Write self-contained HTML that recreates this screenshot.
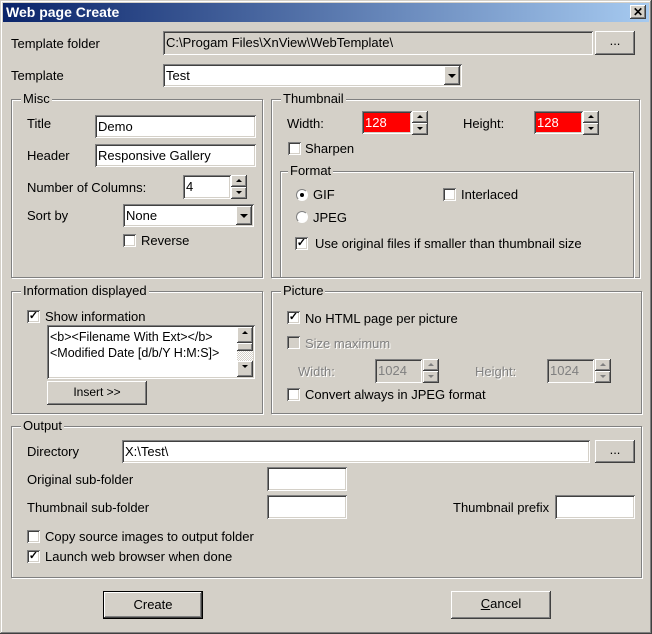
<!DOCTYPE html>
<html><head><style>
*{margin:0;padding:0;box-sizing:border-box}
body{width:652px;height:634px;background:#d4d0c8;position:relative;overflow:hidden;font:13px "Liberation Sans",sans-serif;color:#000}
.win{position:absolute;left:0;top:0;width:652px;height:634px;box-shadow:inset -1px -1px #404040,inset 1px 1px #d4d0c8,inset -2px -2px #808080,inset 2px 2px #fff}
.tb{position:absolute;left:3px;top:3px;width:646px;height:19px;background:linear-gradient(to right,#0a246a,#a6caf0);color:#fff;font-weight:bold;font-size:14px;line-height:19px;padding-left:3px}
.x{position:absolute;left:630px;top:5px;width:16px;height:14px;background:#d4d0c8;box-shadow:inset -1px -1px #404040,inset 1px 1px #fff,inset -2px -2px #808080;font:bold 12px "Liberation Sans";line-height:14px;text-align:center;color:#000}
.t{position:absolute;line-height:16px;white-space:nowrap;margin-top:1px}
.d{color:#808080;text-shadow:1px 1px #fff}
.f{position:absolute;background:#fff;box-shadow:inset 1px 1px #808080,inset -1px -1px #fff,inset 2px 2px #404040,inset -2px -2px #d4d0c8;padding:3px 0 0 3px;line-height:18px;white-space:nowrap;overflow:hidden}
.fd{background:#d4d0c8;color:#808080}
.b{position:absolute;background:#d4d0c8;box-shadow:inset -1px -1px #404040,inset 1px 1px #fff,inset -2px -2px #808080;text-align:center;white-space:nowrap}
.g{position:absolute;border:1px solid #808080;box-shadow:1px 1px #fff,inset 1px 1px #fff}
.gl{position:absolute;top:-9px;left:9px;background:#d4d0c8;padding:0 2px;line-height:16px}
.cb{position:absolute;width:13px;height:13px;background:#fff;box-shadow:inset 1px 1px #808080,inset -1px -1px #fff,inset 2px 2px #404040,inset -2px -2px #d4d0c8;font-size:11px;line-height:13px;text-align:center;font-weight:bold}
.cbd{background:#d4d0c8}
.rb{position:absolute;width:12px;height:12px;border-radius:50%;background:#fff;border:1px solid;border-color:#808080 #fff #fff #808080}
.rb i{position:absolute;left:3px;top:3px;width:4px;height:4px;border-radius:50%;background:#000}
.up,.dn{position:absolute;width:16px;height:11px}
.up:after,.dn:after{content:"";position:absolute;left:5px;border-left:3px solid transparent;border-right:3px solid transparent}
.up:after{top:4px;border-bottom:3px solid #000}
.dn:after{top:4px;border-top:3px solid #000}
.dis:after{border-bottom-color:#808080;border-top-color:#808080}
.ar:after{content:"";position:absolute;left:4px;top:8px;border-left:4px solid transparent;border-right:4px solid transparent;border-top:4px solid #000}
</style></head><body>
<div class="win"></div>
<div class="tb">Web page Create</div>
<div class="x">✕</div>

<div class="t" style="left:11px;top:35px">Template folder</div>
<div class="f fd" style="left:163px;top:31px;width:430px;height:24px;color:#000">C:\Progam Files\XnView\WebTemplate\</div>
<div class="b" style="left:595px;top:31px;width:40px;height:24px;line-height:20px">...</div>
<div class="t" style="left:11px;top:67px">Template</div>
<div class="f" style="left:163px;top:64px;width:299px;height:23px">Test</div>
<div class="b ar" style="left:444px;top:66px;width:16px;height:19px"></div>

<div class="g" style="left:11px;top:99px;width:252px;height:179px"><div class="gl">Misc</div></div>
<div class="t" style="left:27px;top:115px">Title</div>
<div class="f" style="left:95px;top:115px;width:161px;height:23px">Demo</div>
<div class="t" style="left:27px;top:147px">Header</div>
<div class="f" style="left:95px;top:144px;width:161px;height:23px">Responsive Gallery</div>
<div class="t" style="left:27px;top:179px">Number of Columns:</div>
<div class="f" style="left:183px;top:175px;width:48px;height:24px">4</div>
<div class="b up" style="left:231px;top:175px;width:16px;height:12px"></div>
<div class="b dn" style="left:231px;top:187px;width:16px;height:12px"></div>
<div class="t" style="left:27px;top:207px">Sort by</div>
<div class="f" style="left:123px;top:204px;width:131px;height:23px">None</div>
<div class="b ar" style="left:236px;top:206px;width:16px;height:19px"></div>
<div class="cb" style="left:123px;top:234px"></div>
<div class="t" style="left:141px;top:232px">Reverse</div>

<div class="g" style="left:271px;top:99px;width:369px;height:179px"><div class="gl">Thumbnail</div></div>
<div class="t" style="left:287px;top:115px">Width:</div>
<div class="f" style="left:362px;top:111px;width:50px;height:23px;background:#f00;color:#fff">128</div>
<div class="b up" style="left:412px;top:111px;height:12px"></div>
<div class="b dn" style="left:412px;top:123px;height:12px"></div>
<div class="t" style="left:463px;top:115px">Height:</div>
<div class="f" style="left:534px;top:111px;width:49px;height:23px;background:#f00;color:#fff">128</div>
<div class="b up" style="left:583px;top:111px;height:12px"></div>
<div class="b dn" style="left:583px;top:123px;height:12px"></div>
<div class="cb" style="left:288px;top:142px"></div>
<div class="t" style="left:305px;top:140px">Sharpen</div>

<div class="g" style="left:280px;top:171px;width:354px;height:107px"><div class="gl" style="left:7px">Format</div></div>
<div class="rb" style="left:296px;top:189px"><i></i></div>
<div class="t" style="left:313px;top:186px">GIF</div>
<div class="cb" style="left:443px;top:188px"></div>
<div class="t" style="left:461px;top:186px">Interlaced</div>
<div class="rb" style="left:296px;top:211px"></div>
<div class="t" style="left:313px;top:209px">JPEG</div>
<div class="cb" style="left:295px;top:237px">✓</div>
<div class="t" style="left:315px;top:235px">Use original files if smaller than thumbnail size</div>

<div class="g" style="left:11px;top:291px;width:252px;height:123px"><div class="gl">Information displayed</div></div>
<div class="cb" style="left:27px;top:310px">✓</div>
<div class="t" style="left:45px;top:308px">Show information</div>
<div class="f" style="left:47px;top:325px;width:208px;height:54px;font-size:12.5px;line-height:16px;padding-top:4px">&lt;b&gt;&lt;Filename With Ext&gt;&lt;/b&gt;<br>&lt;Modified Date [d/b/Y H:M:S]&gt;</div>
<div style="position:absolute;left:237px;top:327px;width:16px;height:50px;background:repeating-conic-gradient(#fff 0 25%,#d4d0c8 0 50%) 0 0/2px 2px"></div>
<div class="b up" style="left:237px;top:327px;height:16px"></div>
<div class="b" style="left:237px;top:343px;width:16px;height:8px"></div>
<div class="b dn" style="left:237px;top:361px;height:16px"></div>
<div class="b" style="left:47px;top:381px;width:100px;height:24px;line-height:23px;font-size:12px">Insert &gt;&gt;</div>

<div class="g" style="left:271px;top:291px;width:371px;height:123px"><div class="gl">Picture</div></div>
<div class="cb" style="left:287px;top:311px">✓</div>
<div class="t" style="left:305px;top:310px">No HTML page per picture</div>
<div class="cb cbd" style="left:287px;top:336px"></div>
<div class="t d" style="left:305px;top:335px">Size maximum</div>
<div class="t d" style="left:298px;top:363px">Width:</div>
<div class="f fd" style="left:375px;top:359px;width:47px;height:24px">1024</div>
<div class="b up dis" style="left:423px;top:359px;height:12px"></div>
<div class="b dn dis" style="left:423px;top:371px;height:12px"></div>
<div class="t d" style="left:475px;top:363px">Height:</div>
<div class="f fd" style="left:547px;top:359px;width:47px;height:24px">1024</div>
<div class="b up dis" style="left:595px;top:359px;height:12px"></div>
<div class="b dn dis" style="left:595px;top:371px;height:12px"></div>
<div class="cb" style="left:287px;top:388px"></div>
<div class="t" style="left:305px;top:386px">Convert always in JPEG format</div>

<div class="g" style="left:11px;top:426px;width:631px;height:152px"><div class="gl">Output</div></div>
<div class="t" style="left:27px;top:443px">Directory</div>
<div class="f" style="left:122px;top:440px;width:468px;height:23px">X:\Test\</div>
<div class="b" style="left:595px;top:440px;width:40px;height:23px;line-height:20px">...</div>
<div class="t" style="left:27px;top:471px">Original sub-folder</div>
<div class="f" style="left:267px;top:467px;width:80px;height:24px"></div>
<div class="t" style="left:27px;top:499px">Thumbnail sub-folder</div>
<div class="f" style="left:267px;top:495px;width:80px;height:24px"></div>
<div class="t" style="left:453px;top:499px">Thumbnail prefix</div>
<div class="f" style="left:555px;top:495px;width:80px;height:24px"></div>
<div class="cb" style="left:27px;top:530px"></div>
<div class="t" style="left:45px;top:528px">Copy source images to output folder</div>
<div class="cb" style="left:27px;top:550px">✓</div>
<div class="t" style="left:45px;top:548px">Launch web browser when done</div>

<div class="b" style="left:103px;top:591px;width:100px;height:28px;line-height:26px;border:1px solid #000">Create</div>
<div class="b" style="left:451px;top:591px;width:100px;height:28px;line-height:26px"><u>C</u>ancel</div>
</body></html>
